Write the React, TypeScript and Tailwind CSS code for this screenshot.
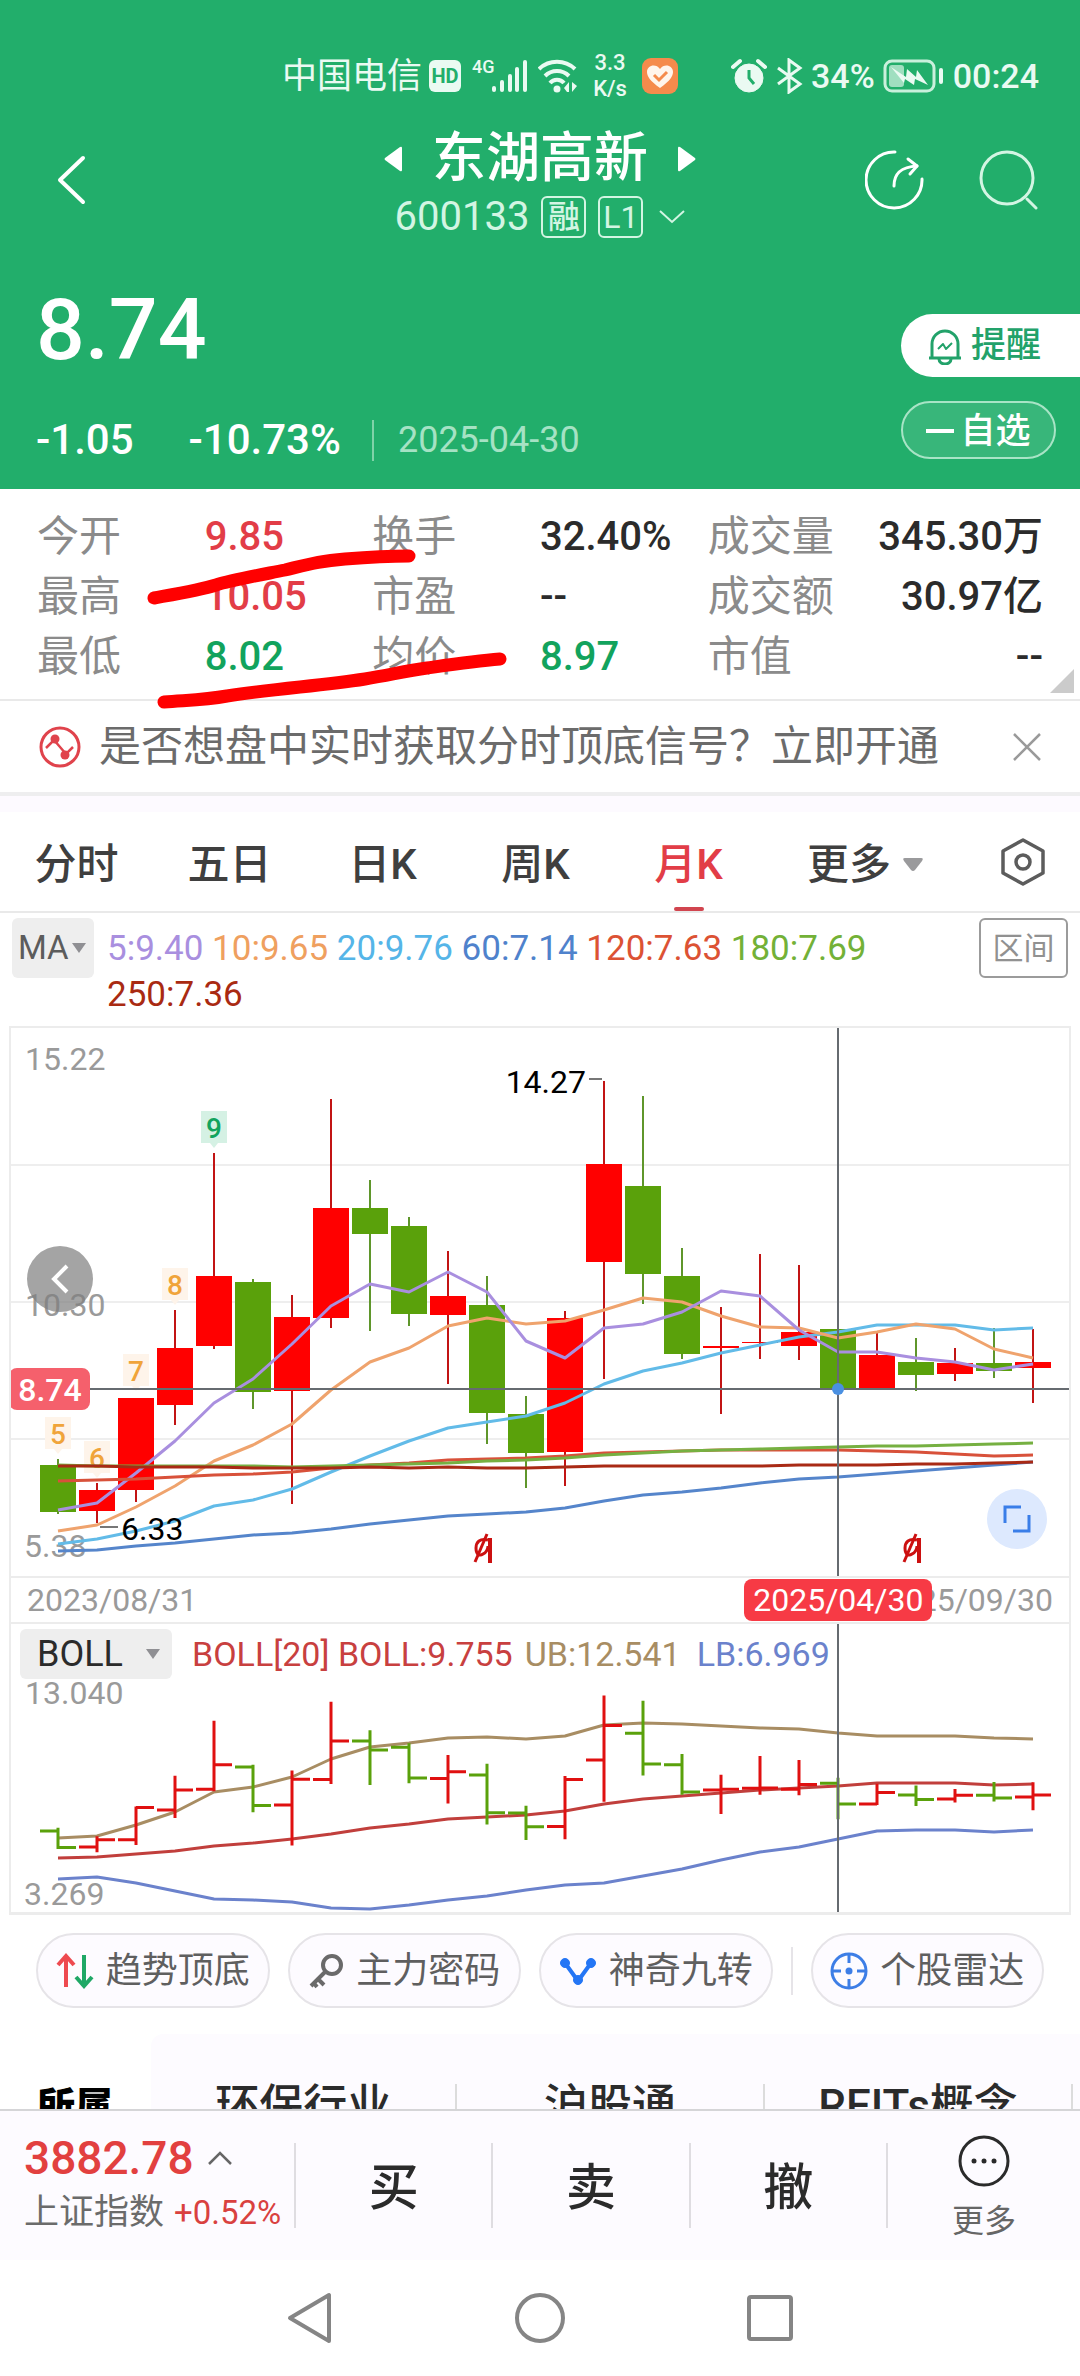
import { useState } from 'react';
import type { ReactNode } from 'react';

type Candle = [up: boolean, high: number, top: number, bottom: number, low: number];

const GREEN = '#5aa10b';
const RED = '#ff0000';

const FIRST_X = 58;
const STEP = 39;
const BODY = 36;
const CURSOR_X = 838;
const CURSOR_Y = 361;

// Monthly candles, in chart units measured from the top of the price panel
const CANDLES: Candle[] = [
  [false, 431, 437, 484, 486],
  [true, 455, 462, 483, 495],
  [true, 370, 370, 462, 474],
  [true, 282, 320, 377, 397],
  [true, 125, 248, 318, 321],
  [false, 251, 254, 364, 381],
  [true, 267, 289, 363, 476],
  [true, 71, 180, 290, 300],
  [false, 152, 180, 206, 303],
  [false, 189, 198, 286, 298],
  [true, 223, 268, 287, 356],
  [false, 248, 277, 385, 416],
  [false, 368, 386, 425, 460],
  [true, 283, 290, 424, 458],
  [true, 53, 136, 234, 351],
  [false, 68, 158, 246, 276],
  [false, 220, 248, 326, 331],
  [true, 279, 318, 320, 386],
  [true, 226, 314, 315, 331],
  [true, 237, 304, 318, 332],
  [false, 288, 301, 360, 401],
  [true, 305, 327, 360, 360],
  [false, 310, 334, 347, 363],
  [true, 320, 335, 346, 353],
  [false, 300, 335, 343, 350],
  [true, 301, 334, 340, 375],
];

const MA_LINES = [
  { color: '#5585cb', ys: [523, 522, 518, 515, 511, 507, 505, 501, 496, 492, 488, 486, 484, 480, 473, 467, 464, 460, 455, 451, 449, 446, 443, 440, 437, 434] },
  { color: '#62bbe8', ys: [516, 511, 503, 493, 478, 472, 461, 444, 428, 413, 400, 394, 388, 375, 356, 343, 335, 325, 317, 309, 304, 297, 297, 297, 302, 300] },
  { color: '#efa36d', ys: [503, 497, 479, 458, 433, 417, 396, 362, 334, 320, 298, 290, 296, 293, 282, 270, 274, 288, 299, 300, 310, 304, 296, 301, 321, 330] },
  { color: '#a98fdf', ys: [482, 475, 445, 413, 375, 351, 316, 278, 256, 264, 244, 264, 313, 330, 300, 296, 284, 263, 268, 302, 324, 324, 330, 334, 342, 336] },
  { color: '#d8513a', ys: [453, 452, 451, 449, 447, 446, 444, 440, 437, 435, 432, 431, 430, 428, 425, 424, 423, 422, 422, 422, 422, 423, 424, 426, 428, 427] },
  { color: '#76b041', ys: [437, 438, 438, 438, 438, 438, 439, 438, 437, 436, 435, 433, 432, 430, 427, 425, 423, 422, 421, 420, 419, 418, 418, 417, 416, 415] },
  { color: '#a92a15', ys: [438, 438, 439, 439, 439, 440, 440, 440, 439, 440, 439, 440, 440, 439, 438, 438, 438, 438, 438, 437, 437, 437, 436, 436, 435, 434] },
];

const BOLL_LINES = [
  { color: '#a88d63', ys: [214, 212, 201, 188, 168, 163, 153, 135, 123, 119, 114, 113, 115, 112, 101, 99, 100, 102, 104, 105, 109, 112, 112, 112, 114, 115] },
  { color: '#c13f3c', ys: [234, 233, 230, 227, 222, 219, 215, 210, 204, 200, 195, 193, 191, 187, 180, 175, 172, 169, 166, 164, 162, 159, 159, 159, 161, 160] },
  { color: '#6b82cc', ys: [255, 253, 259, 267, 275, 276, 278, 284, 285, 281, 276, 272, 266, 261, 259, 252, 245, 236, 228, 223, 215, 207, 206, 206, 208, 206] },
];

const COUNT_TAGS = [
  { n: 5, x: 58, y: 389, done: false },
  { n: 6, x: 97, y: 413, done: false },
  { n: 7, x: 136, y: 326, done: false },
  { n: 8, x: 175, y: 240, done: false },
  { n: 9, x: 214, y: 83, done: true },
];

const TABS = ['分时', '五日', '日K', '周K', '月K'];

const STATS = [
  [
    { label: '今开', value: '9.85', tone: 'text-[#e23d47]' },
    { label: '换手', value: '32.40%', tone: 'text-[#2b2b2b]' },
    { label: '成交量', value: '345.30万', tone: 'text-[#2b2b2b]' },
  ],
  [
    { label: '最高', value: '10.05', tone: 'text-[#e23d47]' },
    { label: '市盈', value: '--', tone: 'text-[#2b2b2b]' },
    { label: '成交额', value: '30.97亿', tone: 'text-[#2b2b2b]' },
  ],
  [
    { label: '最低', value: '8.02', tone: 'text-[#12a35d]' },
    { label: '均价', value: '8.97', tone: 'text-[#12a35d]' },
    { label: '市值', value: '--', tone: 'text-[#2b2b2b]' },
  ],
];

const MA_LEGEND = [
  { text: '5:9.40', tone: 'text-[#a98fdf]' },
  { text: '10:9.65', tone: 'text-[#efa05f]' },
  { text: '20:9.76', tone: 'text-[#55b5e8]' },
  { text: '60:7.14', tone: 'text-[#4f82cc]' },
  { text: '120:7.63', tone: 'text-[#dc5234]' },
  { text: '180:7.69', tone: 'text-[#73b137]' },
  { text: '250:7.36', tone: 'text-[#a92a12]' },
];

const xAt = (i: number) => FIRST_X + i * STEP;
const toPoints = (ys: number[]) => ys.map((y, i) => `${xAt(i)},${y}`).join(' ');
// Same prices, squeezed into the BOLL panel
const bollY = (y: number) => 54 + y * 0.35;

function StatusBar() {
  return (
    <div className="flex h-[52px] items-center justify-end pr-[41px] text-[34px] leading-none text-[#eafaf2]">
      <span className="text-[35px]">中国电信</span>
      <span className="ml-[7px] flex h-8 w-8 items-center justify-center rounded-md bg-[#eafaf2] text-[20px] font-bold text-[#22ae6b]">HD</span>
      <svg width="56" height="38" viewBox="0 0 56 38" className="ml-[11px]" fill="#eafaf2">
        <text x="0" y="16" fontSize="18" fontWeight="500">4G</text>
        <rect x="20" y="29" width="4" height="6" rx="2" />
        <rect x="28" y="23" width="4" height="12" rx="2" />
        <rect x="36" y="17" width="4" height="18" rx="2" />
        <rect x="43" y="10" width="4" height="25" rx="2" />
        <rect x="51" y="3" width="4" height="32" rx="2" />
      </svg>
      <svg width="42" height="38" viewBox="0 0 42 38" className="ml-2.5" fill="none" stroke="#eafaf2" strokeWidth="4">
        <path d="M1 12a26 26 0 0 1 36 0" />
        <path d="M7 19a17 17 0 0 1 24 0" />
        <path d="M12 26a9 9 0 0 1 14 0" />
        <circle cx="19" cy="32" r="3.5" fill="#eafaf2" stroke="none" />
        <path d="M26 31l5-6v10h-2zM34 25v10l5-6z" fill="#eafaf2" stroke="none" />
      </svg>
      <span className="ml-2.5 flex w-10 flex-col items-center text-[22px] leading-[26px] font-medium">
        <span>3.3</span>
        <span>K/s</span>
      </span>
      <svg width="36" height="36" viewBox="0 0 36 36" className="ml-3">
        <rect width="36" height="36" rx="9" fill="#f58b4c" />
        <path d="M18 30C8 23 5 18 5 14c0-7 9-9 13-3 4-6 13-4 13 3 0 4-3 9-13 16z" fill="#fff5ec" />
        <path d="M12 17l5 5 8-8" fill="none" stroke="#f58b4c" strokeWidth="3" />
      </svg>
      <svg width="36" height="36" viewBox="0 0 36 36" className="ml-[53px]" fill="none" stroke="#eafaf2">
        <circle cx="18" cy="20" r="14" fill="#eafaf2" />
        <path d="M2 9l7-6M34 9l-7-6" strokeWidth="4" strokeLinecap="round" />
        <path d="M18 12v8l5 6" stroke="#22ae6b" strokeWidth="3" />
      </svg>
      <svg width="28" height="36" viewBox="0 0 28 36" className="ml-2" fill="none" stroke="#eafaf2" strokeWidth="3">
        <path d="M3 10l22 16-11 8V2l11 8L3 26" />
      </svg>
      <span className="ml-2 font-medium">34%</span>
      <svg width="62" height="34" viewBox="0 0 62 34" className="ml-2">
        <rect x="2" y="2" width="49" height="30" rx="7" fill="none" stroke="#c9f0dc" strokeWidth="3" />
        <rect x="6" y="6" width="15" height="22" rx="3" fill="#a0dfc0" />
        <rect x="56" y="9" width="4" height="16" rx="2" fill="#eafaf2" />
        <path d="M8 8l15 10 1-8 9 8 1-7 11 15-13-6-1 6-9-6-1 4z" fill="#eafaf2" />
      </svg>
      <span className="ml-2 font-medium">00:24</span>
    </div>
  );
}

function Header() {
  return (
    <header className="bg-[#22ae6b] pt-[50px] pb-[27px] text-white">
      <StatusBar />

      <div className="grid grid-cols-[1fr_auto_1fr] items-center pt-4">
        <button aria-label="返回" className="ml-[56px] w-8">
          <svg width="32" height="50" viewBox="0 0 32 50" fill="none" stroke="currentColor" strokeWidth="4" strokeLinecap="round" strokeLinejoin="round">
            <path d="M27 3L4 25l23 22" />
          </svg>
        </button>
        <div className="flex flex-col items-center pt-2">
          <div className="flex h-[66px] items-center gap-[30px]">
            <button aria-label="上一只">
              <svg width="18" height="26" viewBox="0 0 18 26" fill="currentColor"><path d="M16 1q2-1 2 1v22q0 2-2 1L1 14q-1-1 0-2z" /></svg>
            </button>
            <h1 className="text-[54px] leading-none font-medium">东湖高新</h1>
            <button aria-label="下一只">
              <svg width="18" height="26" viewBox="0 0 18 26" fill="currentColor"><path d="M2 1Q0 0 0 2v22q0 2 2 1l15-11q1-1 0-2z" /></svg>
            </button>
          </div>
          <div className="flex h-[50px] items-center gap-3 text-[#d3f5e3]">
            <span className="text-[40px] leading-none">600133</span>
            <span className="flex h-[42px] w-[45px] items-center justify-center rounded-md border-2 border-current text-[32px] leading-none font-medium">融</span>
            <span className="flex h-[42px] w-[45px] items-center justify-center rounded-md border-2 border-current text-[32px] leading-none">L1</span>
            <svg width="26" height="14" viewBox="0 0 26 14" className="ml-1" fill="none" stroke="currentColor" strokeWidth="2"><path d="M1 1l12 11L25 1" /></svg>
          </div>
        </div>
        <div className="flex items-center justify-end gap-[54px] pr-[41px]">
          <button aria-label="分享">
            <svg width="60" height="60" viewBox="0 0 60 60" fill="none" stroke="currentColor" strokeWidth="3" strokeLinecap="round" strokeLinejoin="round">
              <path d="M30 2a28 28 0 1 0 27 27" />
              <path d="M29 36c0-12 6-19 23-20" />
              <path d="M43 9l9 7-7 8" />
            </svg>
          </button>
          <button aria-label="搜索">
            <svg width="60" height="60" viewBox="0 0 60 60" fill="none" stroke="#d3f5e3" strokeWidth="3" strokeLinecap="round">
              <circle cx="28" cy="28" r="26" />
              <path d="M48 49l9 9" />
            </svg>
          </button>
        </div>
      </div>

      <div className="flex items-start justify-between">
        <div className="pt-11 pl-9">
          <p className="text-[86px] leading-[88px] font-medium">8.74</p>
          <div className="mt-11 flex h-11 items-center text-[42px] leading-none font-medium">
            <span>-1.05</span>
            <span className="ml-[55px]">-10.73%</span>
            <span className="ml-[31px] h-[41px] w-0.5 bg-[#7fd3a8]" />
            <time className="ml-6 text-[36px] font-normal text-[#a5e2c4]">2025-04-30</time>
          </div>
        </div>
        <div className="flex w-[179px] flex-col gap-6 pt-[72px]">
          <button className="flex h-[63px] items-center gap-2 rounded-l-full bg-white pt-0.5 pl-[26px] text-[35px] font-medium text-[#22a26a]">
            <svg width="36" height="36" viewBox="0 0 36 36" fill="none" stroke="currentColor" strokeWidth="3" strokeLinejoin="round">
              <path d="M2 29h32M5 28V15a13 13 0 0 1 26 0v13" />
              <path d="M12 30a6 5 0 0 0 12 0" />
              <path d="M11 20l5-5 3 5 6-6" strokeWidth="2" />
            </svg>
            提醒
          </button>
          <button className="mr-6 flex h-[58px] items-center justify-center gap-1.5 rounded-full border-2 border-[#a8e4c6] bg-white/10 pt-0.5 text-[35px] leading-none font-medium">
            <span className="h-1 w-7 bg-current" />
            自选
          </button>
        </div>
      </div>
    </header>
  );
}

function Stats() {
  return (
    <section className="relative border-b-2 border-[#e9e9e9] px-[37px] pt-[18px] pb-3">
      {STATS.map(row => (
        <dl key={row[0].label} className="grid h-[60px] grid-cols-[1fr_1fr_1fr_1fr_2fr] items-center text-[42px] leading-none">
          {row.slice(0, 2).map(cell => (
            <div key={cell.label} className="col-span-2 grid grid-cols-2 items-center">
              <dt className="text-[#8b8b8b]">{cell.label}</dt>
              <dd className={`text-[40px] font-medium ${cell.tone}`}>{cell.value}</dd>
            </div>
          ))}
          <div className="flex items-center justify-between">
            <dt className="text-[#8b8b8b]">{row[2].label}</dt>
            <dd className={`text-[40px] font-medium ${row[2].tone}`}>{row[2].value}</dd>
          </div>
        </dl>
      ))}
      <svg width="24" height="24" viewBox="0 0 24 24" className="absolute right-1.5 bottom-1.5" fill="#cbcbcb"><path d="M24 0v24H0z" /></svg>

      {/* Hand-drawn marks under the day's range */}
      <svg viewBox="0 0 1080 230" className="pointer-events-none absolute inset-x-0 top-0 z-10 w-full" fill="none" stroke="#ff0000" strokeWidth="13" strokeLinecap="round" strokeLinejoin="round">
        <path d="M154 109C176 105 200 101 216 96S260 86 285 81C310 75 320 72 345 70S390 67 409 67" />
        <path d="M164 213C190 211 205 211 227 207C280 199 320 197 365 190C390 186 405 182 427 179C455 175 475 172 500 170" />
      </svg>
    </section>
  );
}

function Banner() {
  return (
    <div className="flex h-[95px] items-center border-b-4 border-[#eeeeef] px-[39px]">
      <svg width="42" height="42" viewBox="0 0 42 42" fill="none" stroke="#e0434c" strokeWidth="3">
        <circle cx="21" cy="21" r="19" />
        <path d="M7 22l8-8 12 14 7-7" strokeWidth="2.5" />
        <circle cx="16" cy="13" r="4.5" fill="#e0434c" stroke="none" />
        <circle cx="26" cy="29" r="4.5" fill="#e0434c" stroke="none" />
      </svg>
      <a href="#signal" className="ml-[18px] flex-1 text-[42px] leading-none text-[#6b6b6b]">是否想盘中实时获取分时顶底信号？立即开通</a>
      <button aria-label="关闭">
        <svg width="28" height="28" viewBox="0 0 28 28" stroke="#9a9a9a" strokeWidth="2.5"><path d="M1 1l26 26M27 1L1 27" /></svg>
      </button>
    </div>
  );
}

function PeriodTabs() {
  const [active, setActive] = useState('月K');
  return (
    <nav className="grid h-[101px] grid-cols-[153fr_153fr_153fr_153fr_153fr_200fr_115fr] border-b-2 border-[#e9e9e9] text-[42px] leading-none text-[#3f3f3f]">
      {TABS.map(tab => (
        <button
          key={tab}
          onClick={() => setActive(tab)}
          className={`relative pt-1.5 font-medium ${active === tab ? 'text-[#e23d47]' : ''}`}
        >
          {tab}
          {active === tab && <span className="absolute bottom-0 left-1/2 h-1 w-[30px] -translate-x-1/2 rounded-sm bg-[#d1454f]" />}
        </button>
      ))}
      <button className="flex items-center justify-center gap-3 pt-1.5 font-medium">
        更多
        <svg width="20" height="14" viewBox="0 0 20 14" fill="#9a9a9c"><path d="M2 0h16q3 0 1 3l-7 9q-2 2-4 0L1 3q-2-3 1-3z" /></svg>
      </button>
      <button aria-label="设置" className="flex items-center justify-center">
        <svg width="44" height="48" viewBox="0 0 44 48" fill="none" stroke="#5c5c5c" strokeWidth="3.5" strokeLinejoin="round">
          <path d="M22 2l20 11v22L22 46 2 35V13z" />
          <circle cx="22" cy="24" r="7" />
        </svg>
      </button>
    </nav>
  );
}

function IndicatorBar() {
  return (
    <div className="flex h-[113px] items-start px-3 pt-[5px]">
      <label className="relative">
        <select aria-label="主图指标" className="h-[60px] w-[82px] appearance-none rounded-md bg-[#eeeeee] pl-1.5 text-[33px] text-[#5c5c5c]">
          <option>MA</option>
          <option>BOLL</option>
        </select>
        <svg width="14" height="10" viewBox="0 0 14 10" className="pointer-events-none absolute top-[25px] right-2" fill="#8f8f93"><path d="M0 0h14L7 10z" /></svg>
      </label>
      <p className="ml-[13px] flex-1 pt-2 text-[35px] leading-[46px]">
        {MA_LEGEND.map(item => (
          <span key={item.text}><span className={item.tone}>{item.text}</span>{' '}</span>
        ))}
      </p>
      <button className="ml-[19px] h-[60px] w-[89px] rounded-md border-2 border-[#9b9b9b] pt-0.5 text-[31px] text-[#919191]">区间</button>
    </div>
  );
}

// Ex-rights mark shown under a candle
function ExRight({ x }: { x: number }) {
  return (
    <g fill="none" stroke="#cc1010" strokeWidth="3">
      <path d={`M${x + 5} 512c-8-2-12 2-12 8 0 7 4 8 7 6 3-1 5-5 5-8`} />
      <path d={`M${x - 8} 534L${x + 4} 506`} />
      <path d={`M${x + 7} 510v25`} strokeWidth="4" />
    </g>
  );
}

function PriceChart() {
  return (
    <div className="relative">
      <svg viewBox="11 0 1058 548" className="block w-full" fontSize="32">
        {[137, 274, 411].map(y => <path key={y} d={`M11 ${y}H1069`} stroke="#eeeeee" strokeWidth="2" />)}

        <g fill="#9a9a9a">
          <text x="25" y="42">15.22</text>
          <text x="25" y="288">10.30</text>
          <text x="24" y="529">5.38</text>
        </g>

        {COUNT_TAGS.map(tag => (
          <g key={tag.n}>
            <path d={`M${tag.x - 13} ${tag.y}h26v32h-9l-4 5-4-5h-9z`} fill={tag.done ? '#d5f1e4' : '#fef4ea'} />
            <text x={tag.x} y={tag.y + 27} fontSize="28" fontWeight="500" textAnchor="middle" fill={tag.done ? '#12a35d' : '#f0a43a'}>{tag.n}</text>
          </g>
        ))}

        {CANDLES.map(([up, high, top, bottom, low], i) => (
          <g key={i} fill={up ? RED : GREEN}>
            <path d={`M${xAt(i)} ${high}V${low}`} stroke={up ? '#c21414' : '#5f962b'} strokeWidth="2" />
            <rect x={xAt(i) - BODY / 2} y={top} width={BODY} height={bottom - top} />
          </g>
        ))}

        {MA_LINES.map(line => (
          <polyline key={line.color} points={toPoints(line.ys)} fill="none" stroke={line.color} strokeWidth="3" strokeLinejoin="round" />
        ))}

        <path d="M589 51h13M100 499h18" stroke="#777777" strokeWidth="2" />
        <text x="586" y="65" textAnchor="end">14.27</text>
        <text x="121" y="512">6.33</text>

        <ExRight x={483} />
        <ExRight x={912} />

        <path d={`M11 ${CURSOR_Y}H1069M${CURSOR_X} 0V548`} stroke="#666b70" strokeWidth="2" />
        <circle cx={CURSOR_X} cy={CURSOR_Y} r="6" fill="#4a90e2" />
        <rect x="9" y="340" width="81" height="42" rx="8" fill="#f5606c" />
        <text x="50" y="373" textAnchor="middle" fontWeight="500" fill="#ffffff">8.74</text>
      </svg>

      <button aria-label="向左" className="absolute top-[218px] left-4 flex size-[66px] items-center justify-center rounded-full bg-[#7d7d7d]/70">
        <svg width="18" height="30" viewBox="0 0 18 30" fill="none" stroke="#ffffff" strokeWidth="4"><path d="M16 2L3 15l13 13" /></svg>
      </button>
      <button aria-label="全屏" className="absolute right-[22px] bottom-[27px] flex size-[60px] items-center justify-center rounded-full bg-[#dde9fe]">
        <svg width="28" height="28" viewBox="0 0 28 28" fill="none" stroke="#3a7ee8" strokeWidth="3"><path d="M18 2H2v16M26 10v16H10" /></svg>
      </button>
    </div>
  );
}

function BollChart() {
  return (
    <div className="relative">
      <svg viewBox="11 0 1058 288" className="block w-full" fontSize="32">
        <g fill="#9a9a9a">
          <text x="25" y="80">13.040</text>
          <text x="24" y="281">3.269</text>
        </g>
        {BOLL_LINES.map(line => (
          <polyline key={line.color} points={toPoints(line.ys)} fill="none" stroke={line.color} strokeWidth="3" strokeLinejoin="round" />
        ))}
        {CANDLES.map(([up, high, top, bottom, low], i) => {
          const x = xAt(i);
          const open = bollY(up ? bottom : top);
          const close = bollY(up ? top : bottom);
          return (
            <path
              key={i}
              d={`M${x} ${bollY(high) - 1}V${bollY(low) + 1}M${x - 18} ${open}H${x}M${x} ${close}h18`}
              stroke={up ? '#e01010' : GREEN}
              strokeWidth="3"
            />
          );
        })}
        <path d={`M${CURSOR_X} 0V288`} stroke="#666b70" strokeWidth="2" />
      </svg>

      <div className="absolute top-[5px] left-[9px] flex items-center text-[34px] leading-none whitespace-nowrap">
        <label className="relative">
          <select aria-label="副图指标" className="h-[50px] w-[152px] appearance-none rounded-md bg-[#eeeeee] pl-[17px] text-[36px] text-[#2b2b2b]">
            <option>BOLL</option>
            <option>MACD</option>
          </select>
          <svg width="14" height="10" viewBox="0 0 14 10" className="pointer-events-none absolute top-5 right-3" fill="#8f8f93"><path d="M0 0h14L7 10z" /></svg>
        </label>
        <span className="ml-5 text-[#c8403f]">BOLL[20] BOLL:9.755</span>
        <span className="ml-3 text-[#a88d63]">UB:12.541</span>
        <span className="ml-4 text-[#6b82cc]">LB:6.969</span>
      </div>
    </div>
  );
}

function Charts() {
  return (
    <section className="mx-[9px] border-x-2 border-t-2 border-b-[3px] border-[#ececec]">
      <PriceChart />
      <div className="relative flex h-12 items-center justify-between border-y-2 border-[#ececec] px-4 text-[32px] leading-none text-[#9a9a9a]">
        <time>2023/08/31</time>
        <time>2025/09/30</time>
        <time className="absolute left-[78.2%] flex h-[42px] w-[188px] -translate-x-1/2 items-center justify-center rounded-lg bg-[#f73a45] text-white">2025/04/30</time>
      </div>
      <BollChart />
    </section>
  );
}

function Pill({ icon, children }: { icon: ReactNode; children: ReactNode }) {
  return (
    <button className="flex h-[75px] flex-1 items-center justify-center gap-3 rounded-full border-2 border-[#e6e4e8] bg-[#fdfbff] text-[36px] leading-none whitespace-nowrap text-[#5f5f5f]">
      {icon}
      {children}
    </button>
  );
}

function ToolPills() {
  return (
    <div className="flex items-center gap-[18px] px-9 pt-[18px]">
      <Pill
        icon={
          <svg width="38" height="36" viewBox="0 0 38 36" fill="none" strokeWidth="4">
            <path d="M10 34V4M2 12l8-9 8 9" stroke="#ee4a50" />
            <path d="M28 2v30M20 24l8 9 8-9" stroke="#1fa866" />
          </svg>
        }
      >
        趋势顶底
      </Pill>
      <Pill
        icon={
          <svg width="36" height="36" viewBox="0 0 36 36" fill="none" stroke="#6a6a6a" strokeWidth="4">
            <circle cx="24" cy="12" r="9" />
            <path d="M18 18L3 33M10 26l6 6M5 29l4 5" />
          </svg>
        }
      >
        主力密码
      </Pill>
      <Pill
        icon={
          <svg width="38" height="32" viewBox="0 0 38 32" fill="#2476f5" stroke="#2476f5">
            <path d="M6 8l13 18L32 8" fill="none" strokeWidth="4" />
            <circle cx="6" cy="8" r="4.5" />
            <circle cx="32" cy="8" r="4.5" />
            <circle cx="19" cy="25" r="4.5" />
          </svg>
        }
      >
        神奇九转
      </Pill>
      <span className="h-12 w-0.5 bg-[#e6e4e8]" />
      <Pill
        icon={
          <svg width="38" height="38" viewBox="0 0 38 38" fill="none" stroke="#3d7ee6" strokeWidth="3">
            <circle cx="19" cy="19" r="17" />
            <path d="M19 2v9M19 27v9M2 19h9M27 19h9" />
            <circle cx="19" cy="19" r="3.5" fill="#3d7ee6" stroke="none" />
          </svg>
        }
      >
        个股雷达
      </Pill>
    </div>
  );
}

function SectorStrip() {
  return (
    <div className="mt-[26px] h-[75px] overflow-hidden">
      <div className="flex h-[144px] text-[44px] leading-none text-[#2b2b2b]">
        <span className="flex w-[14%] items-center pl-[37px] text-[38px] font-black text-black">所属</span>
        <div className="grid flex-1 grid-cols-[306fr_308fr_308fr_7fr] items-center rounded-tl-xl bg-[#fdfbff] text-center font-medium">
          <a href="#industry" className="border-r-2 border-[#dcdcdc]">环保行业</a>
          <a href="#connect" className="border-r-2 border-[#dcdcdc]">沪股通</a>
          <a href="#reits" className="border-r-2 border-[#dcdcdc]">REITs概念</a>
        </div>
      </div>
    </div>
  );
}

function TradeBar() {
  return (
    <footer className="flex h-[151px] border-t-2 border-[#d5d5d7] bg-[#fdfbff]">
      <div className="flex w-[294px] flex-col pt-6 pl-6 leading-none">
        <button className="flex items-center gap-3.5 text-[46px] font-medium text-[#e2403f]">
          3882.78
          <svg width="24" height="14" viewBox="0 0 24 14" fill="none" stroke="#666666" strokeWidth="2.5"><path d="M1 13L12 2l11 11" /></svg>
        </button>
        <p className="mt-3.5 flex items-center gap-2.5 whitespace-nowrap text-[35px] text-[#6b6b6b]">
          上证指数
          <span className="text-[33px] text-[#d9413f]">+0.52%</span>
        </p>
      </div>
      {['买', '卖', '撤'].map(action => (
        <button key={action} className="my-8 flex-1 border-l-2 border-[#dfdde1] pt-1 text-[50px] leading-none font-medium text-[#2b2b2b]">{action}</button>
      ))}
      <button className="my-8 flex w-[194px] flex-col items-center justify-center gap-[18px] border-l-2 border-[#dfdde1] text-[32px] leading-none text-[#666666]">
        <svg width="52" height="52" viewBox="0 0 52 52" className="shrink-0" fill="#2b2b2b">
          <circle cx="26" cy="26" r="24" fill="none" stroke="#2b2b2b" strokeWidth="3" />
          <circle cx="16" cy="26" r="2.5" />
          <circle cx="26" cy="26" r="2.5" />
          <circle cx="36" cy="26" r="2.5" />
        </svg>
        更多
      </button>
    </footer>
  );
}

function SystemNav() {
  return (
    <nav className="flex h-[116px] items-center justify-center gap-[180px]">
      <button aria-label="系统返回">
        <svg width="48" height="52" viewBox="0 0 48 52" fill="none" stroke="#858585" strokeWidth="4" strokeLinejoin="round"><path d="M43 3v46L4 26z" /></svg>
      </button>
      <button aria-label="主屏幕">
        <svg width="52" height="52" viewBox="0 0 52 52" fill="none" stroke="#858585" strokeWidth="4"><circle cx="26" cy="26" r="23" /></svg>
      </button>
      <button aria-label="最近任务">
        <svg width="48" height="48" viewBox="0 0 48 48" fill="none" stroke="#858585" strokeWidth="4"><rect x="3" y="3" width="42" height="42" rx="2" /></svg>
      </button>
    </nav>
  );
}

export default function App() {
  return (
    <div className="min-h-screen bg-white font-[Roboto,'Noto_Sans_CJK_SC',sans-serif]">
      <Header />
      <Stats />
      <Banner />
      <div className="h-4 bg-[#fdfaff]" />
      <PeriodTabs />
      <IndicatorBar />
      <Charts />
      <ToolPills />
      <SectorStrip />
      <TradeBar />
      <SystemNav />
    </div>
  );
}
